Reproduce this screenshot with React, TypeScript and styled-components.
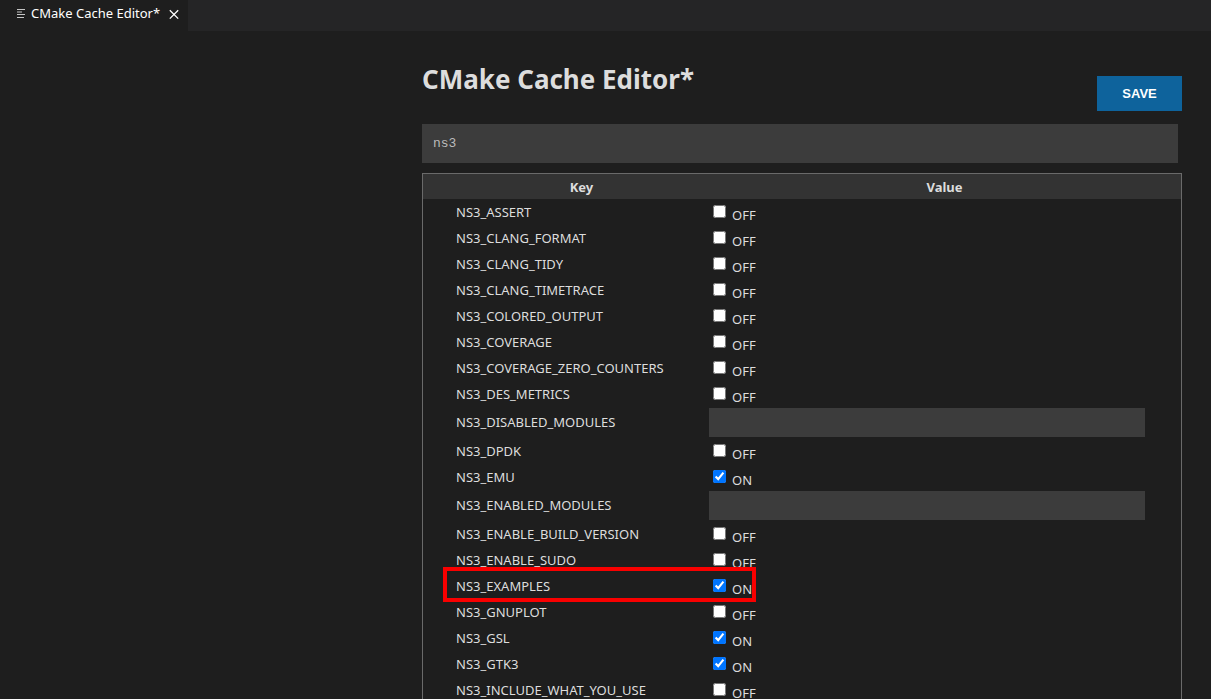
import React, { useState } from "react";
import styled, { createGlobalStyle } from "styled-components";

const GlobalStyle = createGlobalStyle`
  * { box-sizing: border-box; }
  body {
    margin: 0;
    background: #1e1e1e;
    color: #dddddd;
    font: 13px/18px "Noto Sans", sans-serif;
  }
`;

const Editor = styled.div`
  display: flex;
  flex-direction: column;
  height: 100vh;
  overflow: hidden;
`;

const TabBar = styled.header`
  display: flex;
  flex: none;
  height: 31px;
  background: #252526;
`;

const Tab = styled.div`
  display: flex;
  align-items: center;
  padding: 0 6px 4px 16px;
  background: #1e1e1e;
  color: #ffffff;
`;

const TabTitle = styled.span`
  margin: 0 6px 0 5px;
  padding-bottom: 2px;
  white-space: nowrap;
`;

const CloseButton = styled.button`
  display: flex;
  padding: 0;
  border: 0;
  background: none;
  color: #ffffff;
`;

const Main = styled.main`
  display: flex;
  flex: 1;
  justify-content: flex-end;
  min-height: 0;
  padding: 30px 29px 0;
`;

const Content = styled.div`
  width: 100%;
  max-width: 760px;
`;

const TitleRow = styled.div`
  display: flex;
  justify-content: space-between;
  align-items: flex-end;
  height: 50px;
`;

const Title = styled.h1`
  margin: 0;
  align-self: flex-start;
  font-size: 26px;
  line-height: 36px;
`;

const SaveButton = styled.button`
  width: 85px;
  height: 35px;
  border: 0;
  background: #0e639c;
  color: #ffffff;
  font: bold 13px/16px "Liberation Sans", sans-serif;
`;

const Search = styled.input`
  display: block;
  width: calc(100% - 4px);
  height: 39px;
  margin: 13px 0 10px;
  padding: 0 11px;
  border: 0;
  outline: 0;
  background: #3c3c3c;
  color: #bbbbbb;
  font: 13px/16px "Liberation Mono", monospace;
`;

const Table = styled.table`
  width: 100%;
  table-layout: fixed;
  border: 1px solid #6a6a6a;
  border-spacing: 0;
`;

const MarkerColumn = styled.col`
  width: 32px;
`;

const KeyColumn = styled.col`
  width: 253px;
`;

const HeadCell = styled.th`
  height: 25px;
  padding: 1px;
  background: #333333;
`;

const Row = styled.tr<{ $tall: boolean }>`
  height: ${(p) => (p.$tall ? 31 : 26)}px;
`;

const KeyCell = styled.td<{ $tall: boolean }>`
  position: relative;
  padding: 0 1px ${(p) => (p.$tall ? 1 : 0)}px;
`;

const ValueCell = styled.td`
  padding: 0 36px 0 1px;
`;

const Highlight = styled.span`
  position: absolute;
  z-index: 1;
  inset: -6px -48px -3px -12px;
  border: 4px solid #f90000;
  pointer-events: none;
`;

const Toggle = styled.div`
  display: flex;
  align-items: flex-start;
  gap: 6px;
  height: 26px;
  padding: 6px 0 0 4px;

  label {
    padding-top: 1px;
  }
`;

const Checkbox = styled.input`
  width: 13px;
  height: 13px;
  margin: 0;
`;

const TextValue = styled.input`
  display: block;
  width: 100%;
  height: 29px;
  padding: 0 8px;
  border: 0;
  background: #3c3c3c;
  color: #cccccc;
  font: 13px/16px "Liberation Mono", monospace;
`;

type Entry = { key: string; value: boolean | string; highlighted?: boolean };

const initialEntries: Entry[] = [
  { key: "NS3_ASSERT", value: false },
  { key: "NS3_CLANG_FORMAT", value: false },
  { key: "NS3_CLANG_TIDY", value: false },
  { key: "NS3_CLANG_TIMETRACE", value: false },
  { key: "NS3_COLORED_OUTPUT", value: false },
  { key: "NS3_COVERAGE", value: false },
  { key: "NS3_COVERAGE_ZERO_COUNTERS", value: false },
  { key: "NS3_DES_METRICS", value: false },
  { key: "NS3_DISABLED_MODULES", value: "" },
  { key: "NS3_DPDK", value: false },
  { key: "NS3_EMU", value: true },
  { key: "NS3_ENABLED_MODULES", value: "" },
  { key: "NS3_ENABLE_BUILD_VERSION", value: false },
  { key: "NS3_ENABLE_SUDO", value: false },
  { key: "NS3_EXAMPLES", value: true, highlighted: true },
  { key: "NS3_GNUPLOT", value: false },
  { key: "NS3_GSL", value: true },
  { key: "NS3_GTK3", value: true },
  { key: "NS3_INCLUDE_WHAT_YOU_USE", value: false },
];

function CacheRow({ entry, onChange }: { entry: Entry; onChange: (value: boolean | string) => void }) {
  const { key, value, highlighted } = entry;
  const isText = typeof value === "string";
  return (
    <Row $tall={isText}>
      <td />
      <KeyCell $tall={isText}>
        {key}
        {highlighted && <Highlight />}
      </KeyCell>
      <ValueCell>
        {typeof value === "string" ? (
          <TextValue aria-label={key} value={value} onChange={(e) => onChange(e.target.value)} />
        ) : (
          <Toggle>
            <Checkbox id={key} type="checkbox" checked={value} onChange={(e) => onChange(e.target.checked)} />
            <label htmlFor={key}>{value ? "ON" : "OFF"}</label>
          </Toggle>
        )}
      </ValueCell>
    </Row>
  );
}

export default function App() {
  const [entries, setEntries] = useState(initialEntries);
  const [query, setQuery] = useState("ns3");

  const update = (key: string, value: boolean | string) =>
    setEntries((all) => all.map((e) => (e.key === key ? { ...e, value } : e)));

  return (
    <Editor>
      <GlobalStyle />
      <TabBar>
        <Tab>
          <svg width="10" height="10" viewBox="0 0 10 10" fill="none" stroke="#c5c5c5" aria-hidden="true">
            <path d="M1 .5h8M1 3h5M1 5.5h8M1 8.5h7" />
          </svg>
          <TabTitle>CMake Cache Editor*</TabTitle>
          <CloseButton aria-label="Close">
            <svg width="16" height="16" viewBox="0 0 16 16" fill="none" stroke="currentColor" strokeWidth="1.3">
              <path d="M3.8 4.2l8.4 8.4M12.2 4.2l-8.4 8.4" />
            </svg>
          </CloseButton>
        </Tab>
      </TabBar>
      <Main>
        <Content>
          <TitleRow>
            <Title>CMake Cache Editor*</Title>
            <SaveButton>SAVE</SaveButton>
          </TitleRow>
          <Search aria-label="Search" value={query} onChange={(e) => setQuery(e.target.value)} />
          <Table>
            <colgroup>
              <MarkerColumn />
              <KeyColumn />
              <col />
            </colgroup>
            <thead>
              <tr>
                <HeadCell />
                <HeadCell>Key</HeadCell>
                <HeadCell>Value</HeadCell>
              </tr>
            </thead>
            <tbody>
              {entries
                .filter((e) => e.key.toLowerCase().includes(query.toLowerCase()))
                .map((e) => (
                  <CacheRow key={e.key} entry={e} onChange={(value) => update(e.key, value)} />
                ))}
            </tbody>
          </Table>
        </Content>
      </Main>
    </Editor>
  );
}
